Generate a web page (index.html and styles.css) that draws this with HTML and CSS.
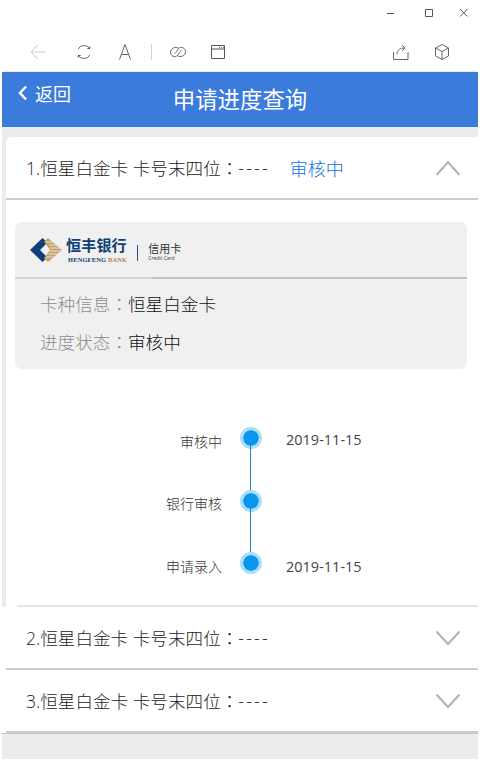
FILE: index.html

```html
<!DOCTYPE html>
<html lang="zh-CN">
<head>
    <meta charset="UTF-8">
    <meta name="viewport" content="width=device-width, initial-scale=1.0">
    <title>申请进度查询</title>
    <link rel="stylesheet" href="styles.css">
</head>
<body>
    <div class="titlebar">
        <svg class="caption-icon" width="14" height="14" viewBox="0 0 14 14"><path d="M0 7.500h7"/></svg>
        <svg class="caption-icon" width="14" height="14" viewBox="0 0 14 14"><path d="M3.500 3.500h7v7h-7z"/></svg>
        <svg class="caption-icon" width="14" height="14" viewBox="0 0 14 14"><path d="M3 3l7.500 7.500M10.500 3L3 10.500"/></svg>
    </div>
    <div class="toolbar">
        <svg class="tool tool-back" width="16" height="16" viewBox="0 0 16 16"><path d="M16 8H1M8 1L1 8l7 7"/></svg>
        <svg class="tool tool-refresh" width="16" height="16" viewBox="0 0 16 16"><path d="M2.200 5A6.500 6.500 0 0 1 13.500 4.500M13.800 11A6.500 6.500 0 0 1 2.500 11.500M11.300 4.500h2.500V2.300M4.700 11.500H2.200v2.200"/></svg>
        <svg class="tool tool-font" width="12" height="16" viewBox="0 0 12 16"><path d="M.5 15.500L6 .5l5.500 15M2.300 10.500h7.400"/></svg>
        <span class="tool-divider"></span>
        <svg class="tool tool-link" width="16" height="12" viewBox="0 0 16 12"><path d="M8.500 2.300C5.500.3.5 2 .5 6.500.5 10 5 12 7.500 9.500 9 8 9.500 5 11.500 4.500"/><path d="M7.500 9.700C10.500 11.700 15.500 10 15.500 5.500 15.500 2 11 0 8.500 2.500 7 4 6.500 7 4.500 7.500"/></svg>
        <svg class="tool tool-window" width="14" height="14" viewBox="0 0 14 14"><path d="M.5.5h13v13H.5zM.5 4h13"/><path class="dots" d="M8 2.300h1M10 2.300h1M12 2.300h1"/></svg>
        <svg class="tool tool-share" width="16" height="16" viewBox="0 0 16 16"><path d="M.5 8v7.500h14.500V8M4 10C4.500 6 7 4 11.500 4M9 1l3 3-3 3"/></svg>
        <svg class="tool tool-box" width="14" height="16" viewBox="0 0 14 16"><path d="M7 .5l6.500 3.500v8L7 15.500.5 12V4zM.5 4L7 7.500 13.500 4M7 7.500v8"/></svg>
    </div>

    <div class="app">
        <header class="app-header">
            <a class="back-link">
                <svg width="10" height="16" viewBox="0 0 10 16"><path d="M8 1.500L2 8l6 6.500"/></svg>
                返回
            </a>
            <h1>申请进度查询</h1>
        </header>

        <div class="list">
            <section class="item item-open">
                <div class="item-head">
                    <span class="item-title">1.恒星白金卡 卡号末四位<span class="colon" lang="zh-TW">：</span><span class="dashes">----</span></span>
                    <span class="item-status">审核中</span>
                    <svg class="arrow" width="24" height="16" viewBox="0 0 24 16"><path d="M.5 15L12 2l11.500 13"/></svg>
                </div>
                <div class="item-body">
                    <div class="card-panel">
                        <div class="logo-row">
                            <svg class="logo-mark" width="33" height="26" viewBox="0 0 33 26">
                                <path class="mark-blue" d="M0 13L12.500 1l5 4.500L10 13l7.500 7.500-5 4.500z"/>
                                <path class="mark-gold" d="M18 1l14 12-14 12-4-3.500L20 13l-6-8.500z"/>
                                <path class="mark-lines" d="M16 5h8M19 8h9M20 11h11M20 14h11M19 17h9M16 20h8"/>
                            </svg>
                            <div class="logo-name">
                                <span class="logo-cn">恒丰银行</span>
                                <span class="logo-en">HENGFENG <em>BANK</em></span>
                            </div>
                            <span class="logo-bar"></span>
                            <div class="logo-sub">
                                <span class="logo-card">信用卡</span>
                                <span class="logo-credit">Credit Card</span>
                            </div>
                        </div>
                        <div class="panel-rule"></div>
                        <p class="info"><span class="info-label">卡种信息<span class="colon" lang="zh-TW">：</span></span>恒星白金卡</p>
                        <p class="info"><span class="info-label">进度状态<span class="colon" lang="zh-TW">：</span></span>审核中</p>
                    </div>

                    <ul class="timeline">
                        <li class="step">
                            <span class="step-name">审核中</span>
                            <span class="step-dot"></span>
                            <span class="step-date">2019-11-15</span>
                        </li>
                        <li class="step">
                            <span class="step-name">银行审核</span>
                            <span class="step-dot"></span>
                            <span class="step-date"></span>
                        </li>
                        <li class="step">
                            <span class="step-name">申请录入</span>
                            <span class="step-dot"></span>
                            <span class="step-date">2019-11-15</span>
                        </li>
                    </ul>
                    <div class="body-rule"></div>
                </div>
            </section>

            <section class="item item-closed">
                <div class="item-head">
                    <span class="item-title">2.恒星白金卡 卡号末四位<span class="colon" lang="zh-TW">：</span><span class="dashes">----</span></span>
                    <svg class="arrow" width="24" height="16" viewBox="0 0 24 16"><path d="M.5 1.500L12 14 23.500 1.500"/></svg>
                </div>
            </section>
            <section class="item item-closed">
                <div class="item-head">
                    <span class="item-title">3.恒星白金卡 卡号末四位<span class="colon" lang="zh-TW">：</span><span class="dashes">----</span></span>
                    <svg class="arrow" width="24" height="16" viewBox="0 0 24 16"><path d="M.5 1.500L12 14 23.500 1.500"/></svg>
                </div>
            </section>
        </div>
    </div>
</body>
</html>
```

FILE: styles.css

```css
* {
    box-sizing: border-box;
}
body {
    margin: 0;
    height: 761px;
    overflow: hidden;
    background-color: white;
    font-family: "Open Sans", "Noto Sans CJK SC", sans-serif;
    color: #333;
}
svg {
    display: block;
    flex: none;
    fill: none;
}
.titlebar {
    height: 26px;
    padding: 6px 9px 0 0;
    display: flex;
    justify-content: flex-end;
    align-items: flex-start;
    gap: 21px;
}
.caption-icon {
    stroke: #555;
    stroke-width: 1;
}
.toolbar {
    height: 45px;
    padding: 7px 31px 0 30px;
    display: flex;
    align-items: center;
}
.tool {
    stroke: #666;
    stroke-width: 1;
}
.tool-back {
    stroke: #ccc;
}
.tool-refresh {
    margin-left: 30px;
}
.tool-font {
    margin-left: 27px;
}
.tool-divider {
    width: 1px;
    height: 16px;
    margin-left: 20px;
    background-color: #d4d4d4;
}
.tool-link {
    margin-left: 18px;
}
.tool-window {
    margin-left: 25px;
    stroke: #555;
}
.tool-share {
    margin-left: auto;
}
.tool-box {
    margin-left: 26px;
}

.app {
    margin: 0 2px;
    height: 688px;
    background-color: #ececec;
    border-top: 1px solid #e4ecf6;
}
.app-header {
    position: relative;
    height: 55px;
    padding-bottom: 3px;
    background-color: #3b7bdc;
    color: white;
    display: flex;
    justify-content: center;
    align-items: center;
}
.app-header h1 {
    margin: 0;
    font-size: 22.400px;
    font-weight: 400;
}
.back-link {
    position: absolute;
    left: 16px;
    top: 8px;
    display: flex;
    align-items: center;
    gap: 7px;
    font-size: 18px;
}
.back-link svg {
    stroke: white;
    stroke-width: 2.500;
}

.list {
    padding-top: 10px;
}
.item-head {
    height: 63px;
    padding: 0 18px 0 20px;
    display: flex;
    align-items: center;
    font-size: 17.600px;
    font-weight: 300;
    color: #222;
    background-color: white;
    border-bottom: 2px solid #ccc;
}
.item-title {
    white-space: nowrap;
}
.colon {
    font-family: "Noto Sans CJK TC", sans-serif;
}
.dashes {
    letter-spacing: 2.200px;
}
.item-status {
    margin-left: 20px;
    font-size: 18px;
    color: #0f6fe6;
}
.arrow {
    margin-left: auto;
    stroke: #aab2bc;
    stroke-width: 2;
}
.item-open {
    margin-left: 4px;
    border-top-left-radius: 6px;
    background-color: white;
}
.item-open .item-head {
    border-top-left-radius: 6px;
}
.item-body {
    height: 407px;
    padding: 22px 11px 0 9px;
    display: flex;
    flex-direction: column;
    background-color: white;
}
.body-rule {
    height: 2px;
    margin: auto -11px 0 2px;
    background-color: #e6e6e6;
}
.item-closed {
    padding-left: 4px;
    background-color: white;
}
.item-closed:last-child {
    box-shadow: 0 1px 0 #c4c4c4;
}

.card-panel {
    height: 147px;
    border-radius: 7px;
    background-color: #f0f0f0;
}
.logo-row {
    height: 55px;
    padding-left: 15px;
    display: flex;
    align-items: center;
    color: #0d3f78;
}
.logo-name {
    margin: 0 0 1px 3px;
    display: flex;
    flex-direction: column;
}
.logo-cn {
    font-size: 15px;
    line-height: 22px;
    font-weight: 700;
    letter-spacing: .2px;
}
.logo-en {
    font-family: "Liberation Serif", serif;
    font-size: 6.400px;
    line-height: 7.500px;
    font-weight: 700;
    white-space: nowrap;
    letter-spacing: .2px;
    padding-left: 2px;
}
.logo-en em {
    font-style: normal;
    color: #a9894f;
}
.logo-bar {
    width: 1px;
    height: 16px;
    margin: 6px 0 0 10px;
    background-color: #1d4f86;
}
.logo-sub {
    margin: 4px 0 0 10px;
    display: flex;
    flex-direction: column;
    color: #333;
}
.logo-card {
    font-size: 11px;
    line-height: 13px;
}
.logo-credit {
    font-size: 5px;
    line-height: 6px;
    white-space: nowrap;
}
.mark-blue {
    fill: #0d3f78;
}
.mark-gold {
    fill: #c5a36b;
}
.mark-lines {
    stroke: #f0f0f0;
    stroke-width: .8;
}
.panel-rule {
    height: 2px;
    background: linear-gradient(to right, #ddd6c8 137px, #b9c6d4 137px);
}
.info {
    margin: 0;
    height: 38px;
    padding-left: 25px;
    display: flex;
    align-items: center;
    font-size: 17.600px;
    font-weight: 300;
    color: #111;
}
.info:first-of-type {
    margin-top: 5px;
}
.info-label {
    color: #8c8c8c;
}

.timeline {
    list-style: none;
    margin: 38px 0 0;
    padding: 0;
}
.step {
    height: 62.500px;
    display: grid;
    grid-template-columns: 207px 58px auto;
    align-items: center;
    font-size: 14px;
    font-weight: 300;
    color: #333;
}
.step-name {
    padding-top: 5px;
    text-align: right;
    white-space: nowrap;
}
.step-dot {
    position: relative;
    justify-self: center;
    width: 22px;
    height: 22px;
    border: 3.500px solid #a8def9;
    border-radius: 50%;
    background-color: #0a96ea;
    background-clip: padding-box;
}
.step-dot::after {
    content: "";
    position: absolute;
    left: 7px;
    top: 15px;
    width: 1px;
    height: 48px;
    background-color: #2a7fb0;
}
.step:last-child .step-dot::after {
    display: none;
}
.step-date {
    padding: 3px 0 0 6px;
    font-size: 14.500px;
    font-weight: 400;
    color: #444;
}
.step:last-child .step-date {
    padding-top: 7px;
}
```
